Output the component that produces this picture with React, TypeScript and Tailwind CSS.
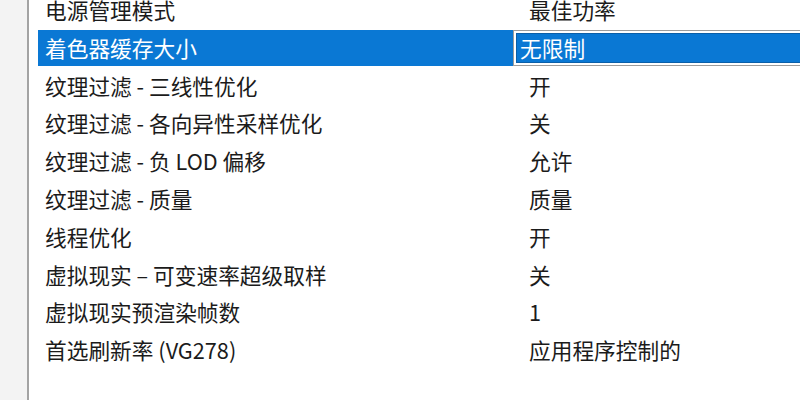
const rows: [string, string][] = [
  ['电源管理模式', '最佳功率'],
  ['着色器缓存大小', '无限制'],
  ['纹理过滤 - 三线性优化', '开'],
  ['纹理过滤 - 各向异性采样优化', '关'],
  ['纹理过滤 - 负 LOD 偏移', '允许'],
  ['纹理过滤 - 质量', '质量'],
  ['线程优化', '开'],
  ['虚拟现实 – 可变速率超级取样', '关'],
  ['虚拟现实预渲染帧数', '1'],
  ['首选刷新率 (VG278)', '应用程序控制的'],
];

const SELECTED = 1;

export default function App() {
  return (
    <div
      className="flex w-[800px] h-[400px] overflow-hidden bg-white text-[21.7px] text-[#1b1b1b]"
      style={{ fontFamily: '"Noto Sans CJK SC", "Noto Sans", sans-serif' }}
    >
      <div className="w-[27px] shrink-0 bg-[#f3f3f3]" />
      <div className="w-[2px] shrink-0 bg-[#a3a3a3]" />
      <div className="flex-1 flex flex-col mt-[-9px]">
        {rows.map(([label, value], i) => {
          const sel = i === SELECTED;
          return (
            <div key={label} className="flex h-[37.8px] shrink-0">
              <div className="w-[484px] shrink-0 pl-[9px] py-[1px]">
                <div
                  className={
                    'h-full flex items-center pl-[7px] leading-none whitespace-pre ' +
                    (sel ? 'bg-[#0a78d4] text-white' : '')
                  }
                >
                  {label}
                </div>
              </div>
              {sel ? (
                <div className="flex-1 border border-[#9c9c9c] border-r-0 p-[2px] pr-0 my-[1px]">
                  <div className="h-full border border-[#0b5fa8] border-r-0 bg-[#0a78d4] text-white flex items-center pl-[3px] leading-none">
                    {value}
                  </div>
                </div>
              ) : (
                <div className="flex-1 flex items-center pl-[16px] leading-none">{value}</div>
              )}
            </div>
          );
        })}
      </div>
    </div>
  );
}
